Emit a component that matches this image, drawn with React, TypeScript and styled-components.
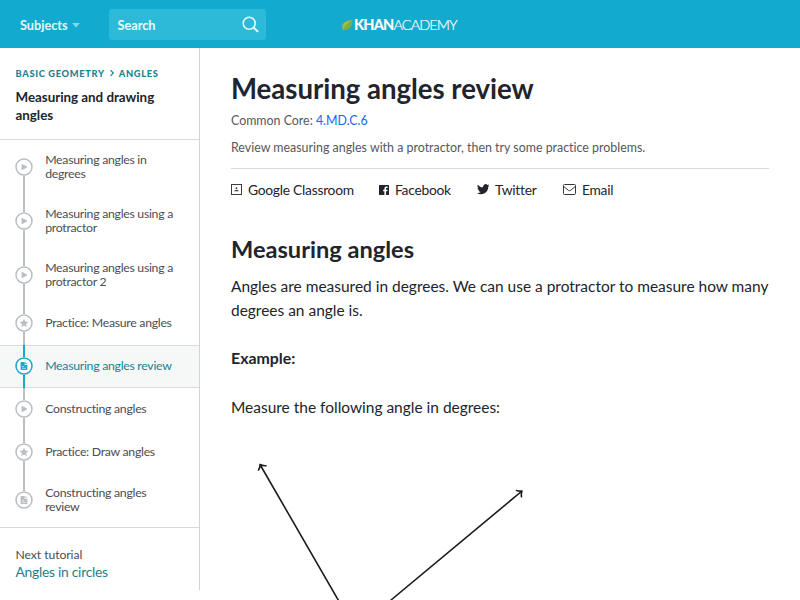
import React from "react";
import styled, { createGlobalStyle, css } from "styled-components";

const GlobalStyle = createGlobalStyle`
  * { box-sizing: border-box; }
  html, body, #root { margin: 0; padding: 0; height: 100%; }
  body { overflow: hidden; background: #fff; font-family: Lato, "Liberation Sans", sans-serif; color: #21242c; font-variant-ligatures: none; }
  svg { display: block; flex: none; }
  a { text-decoration: none; }
`;

const Page = styled.div`
  width: 800px;
  height: 600px;
  overflow: hidden;
  display: flex;
  flex-direction: column;
`;

const TopBar = styled.header`
  flex: none;
  height: 48px;
  background: #12aacf;
  display: grid;
  grid-template-columns: 89px 157px 1fr;
  align-items: center;
  padding-left: 20px;
  color: #fff;
`;

const SubjectsMenu = styled.button`
  border: 0;
  padding: 1px 0 0;
  background: none;
  color: #e3f6fa;
  font: 700 12.7px/20px Lato, sans-serif;
  display: flex;
  align-items: center;
  gap: 4px;
  svg { margin-top: 2px; }
`;

const SearchBox = styled.div`
  height: 31px;
  width: 157px;
  background: #2dbad8;
  border-radius: 3px;
  display: flex;
  align-items: center;
  justify-content: space-between;
  padding: 1px 7px 0 8.500px;
  color: #e9fafc;
  font-size: 12.7px;
  font-weight: 700;
`;

const Logo = styled.div`
  display: flex;
  align-items: center;
  padding-left: 76px;
  padding-top: 1px;
  font-size: 14.500px;
  line-height: 20px;
`;
const LogoHeavy = styled.span`
  font-weight: 900;
  letter-spacing: -0.8px;
`;
const LogoLight = styled.span`
  font-weight: 300;
  letter-spacing: -0.95px;
  -webkit-text-stroke: 0.2px #fff;
`;

const Columns = styled.div`
  flex: 1;
  min-height: 0;
  display: flex;
`;

const Sidebar = styled.aside`
  width: 200px;
  height: 542px;
  flex: none;
  border-right: 1px solid #d2d3d5;
`;

const SidebarHeader = styled.div`
  height: 92px;
  padding: 18px 16px 0 15.5px;
  border-bottom: 1px solid #d6d8da;
`;

const Breadcrumb = styled.nav`
  display: flex;
  align-items: center;
  height: 14px;
  font-size: 9.3px;
  font-weight: 900;
  letter-spacing: 0.66px;
  color: #1b8292;
  svg { margin: 0 4px 0 4px; }
`;

const TutorialTitle = styled.h2`
  margin: 7.500px 0 0;
  font-size: 13.4px;
  line-height: 18px;
  font-weight: 700;
  letter-spacing: -0.03px;
`;

const LessonList = styled.ul`
  list-style: none;
  margin: 0;
  padding: 0;
  border-bottom: 1px solid #d6d8da;
`;

const Lesson = styled.li<{ $tall?: boolean; $active?: boolean }>`
  height: ${(p) => (p.$tall ? 53.85 : 43)}px;
  display: flex;
  align-items: center;
  padding-left: 15px;
  font-size: 12.3px;
  letter-spacing: -0.29px;
  line-height: 14px;
  color: #4b4e53;
  ${(p) =>
    p.$active &&
    css`
      color: #1b7f8e;
      background: #f6f8f8;
      box-shadow: inset 0 1px #d9dbdc, inset 0 -1px #d9dbdc;
    `}
`;

const Track = styled.div<{ $active?: boolean }>`
  width: 18px;
  height: 100%;
  margin-right: 12.200px;
  display: flex;
  flex-direction: column;
  align-items: center;
  color: ${(p) => (p.$active ? "#16a9c8" : "#babec2")};
`;

const Rail = styled.span<{ $hidden?: boolean }>`
  flex: 1;
  width: 2px;
  background: ${(p) => (p.$hidden ? "transparent" : "currentColor")};
`;

const NextTutorial = styled.div`
  padding: 18px 15.5px;
  font-size: 12.2px;
  letter-spacing: -0.08px;
  line-height: 17px;
  color: #4b4e53;
`;
const NextLink = styled.a`
  display: block;
  font-size: 13.8px;
  line-height: 17px;
  letter-spacing: -0.25px;
  color: #1b7f8e;
`;

const Content = styled.main`
  flex: 1;
  padding: 23px 31.5px 0 31px;
`;

const Title = styled.h1`
  margin: 0;
  font-size: 27.6px;
  line-height: 36px;
  font-weight: 700;
  letter-spacing: -0.03px;
`;

const Meta = styled.p`
  margin: 6px 0 0;
  font-size: 12.4px;
  line-height: 16px;
  color: #56585e;
  a { color: #1865f2; }
`;

const Description = styled.p`
  margin: 11px 0 0;
  padding-bottom: 12px;
  font-size: 12.42px;
  line-height: 16px;
  color: #56585e;
  border-bottom: 1px solid #d8d9dc;
`;

const ShareRow = styled.div`
  display: flex;
  margin-top: 10px;
  height: 21px;
`;

const ShareLink = styled.a<{ $width: number }>`
  display: flex;
  align-items: center;
  width: ${(p) => p.$width}px;
  font-size: 13.8px;
  letter-spacing: -0.25px;
  line-height: 20px;
  white-space: nowrap;
  svg { margin-right: 6px; }
`;

const SectionTitle = styled.h2`
  margin: 34px 0 0;
  font-size: 23.6px;
  line-height: 30px;
  font-weight: 700;
`;

const Paragraph = styled.p<{ $gap: number; $bold?: boolean }>`
  margin: ${(p) => p.$gap}px 0 0;
  font-size: ${(p) => (p.$bold ? 15.9 : 15.48)}px;
  line-height: 24px;
  white-space: nowrap;
  font-weight: ${(p) => (p.$bold ? 700 : 400)};
`;

const Figure = styled.figure`
  margin: 31px 0 0;
`;

type Kind = "video" | "exercise" | "article";

const KindIcon = ({ kind }: { kind: Kind }) => (
  <svg width="18" height="18" viewBox="0 0 18 18">
    <circle cx="9" cy="9" r="8" fill="#fff" stroke="currentColor" strokeWidth="1.5" />
    {kind === "video" && <path d="M7 6.3v5.4l5-2.7z" fill="currentColor" stroke="currentColor" strokeWidth="0.8" strokeLinejoin="round" />}
    {kind === "exercise" && (
      <path d="M9 4.7l1.3 2.8 3.1.4-2.3 2.1.6 3L9 11.5 6.3 13l.6-3-2.3-2.1 3.1-.4z" fill="currentColor" />
    )}
    {kind === "article" && (
      <>
        <path d="M6.3 5h3.4v2.9h2.7v4.4q0 .7-.7.7H6.3q-.7 0-.7-.7V5.7q0-.7.7-.7zM10.4 5l2 2.2h-2z" fill="currentColor" />
        <path d="M7 9.6h2.2M7 11.3h4" stroke="#fff" strokeWidth="0.6" />
      </>
    )}
  </svg>
);

const lessons: { label: string[]; kind: Kind; active?: boolean }[] = [
  { label: ["Measuring angles in", "degrees"], kind: "video" },
  { label: ["Measuring angles using a", "protractor"], kind: "video" },
  { label: ["Measuring angles using a", "protractor 2"], kind: "video" },
  { label: ["Practice: Measure angles"], kind: "exercise" },
  { label: ["Measuring angles review"], kind: "article", active: true },
  { label: ["Constructing angles"], kind: "video" },
  { label: ["Practice: Draw angles"], kind: "exercise" },
  { label: ["Constructing angles", "review"], kind: "article" },
];

export default function App() {
  return (
    <Page>
      <GlobalStyle />
      <TopBar>
        <SubjectsMenu>
          Subjects
          <svg width="8" height="5" viewBox="0 0 8 5"><path d="M0 0h8L4 4.6z" fill="#84d5e8" /></svg>
        </SubjectsMenu>
        <SearchBox>
          Search
          <svg width="17" height="17" viewBox="0 0 17 17" fill="none" stroke="#effbfd" strokeLinecap="round">
            <circle cx="7.2" cy="7.2" r="6" strokeWidth="1.6" />
            <path d="M11.8 11.8l3.6 3.4" strokeWidth="2" />
          </svg>
        </SearchBox>
        <Logo>
          <svg width="12" height="12" viewBox="0 0 12 12">
            <path d="M10.600.8C5.500 1.300.4 3.200.3 7.600c0 1.500.3 2.700.8 3.600C3.400 7 6.300 3.600 10.600.8z" fill="#b0b83a" />
            <path d="M1.100 11.200C3.400 7 6.300 3.600 10.600.8c-.5 1.500-.2 3-.8 4.900-1 3.500-4.700 5.600-8.700 5.500z" fill="#7fae45" />
          </svg>
          <LogoHeavy>KHAN</LogoHeavy>
          <LogoLight>ACADEMY</LogoLight>
        </Logo>
      </TopBar>
      <Columns>
        <Sidebar>
          <SidebarHeader>
            <Breadcrumb>
              BASIC GEOMETRY
              <svg width="6" height="8" viewBox="0 0 6 8"><path d="M1.500 1.200L4.300 4 1.500 6.800" fill="none" stroke="currentColor" strokeWidth="1.200" /></svg>
              ANGLES
            </Breadcrumb>
            <TutorialTitle>Measuring and drawing<br />angles</TutorialTitle>
          </SidebarHeader>
          <LessonList>
            {lessons.map((l, i) => (
              <Lesson key={i} $tall={l.label.length > 1} $active={l.active}>
                <Track $active={l.active}>
                  <Rail $hidden={i === 0} />
                  <KindIcon kind={l.kind} />
                  <Rail $hidden={i === lessons.length - 1} />
                </Track>
                <span>{l.label[0]}{l.label[1] && <><br />{l.label[1]}</>}</span>
              </Lesson>
            ))}
          </LessonList>
          <NextTutorial>
            Next tutorial
            <NextLink>Angles in circles</NextLink>
          </NextTutorial>
        </Sidebar>
        <Content>
          <Title>Measuring angles review</Title>
          <Meta>Common Core: <a>4.MD.C.6</a></Meta>
          <Description>Review measuring angles with a protractor, then try some practice problems.</Description>
          <ShareRow>
            <ShareLink $width={148}>
              <svg width="11" height="11" viewBox="0 0 11 11">
                <rect x=".5" y=".5" width="10" height="10" fill="none" stroke="#3a3d44" />
                <circle cx="5.500" cy="4.200" r=".9" fill="#3a3d44" />
                <path d="M3.200 7.300q0-1.600 2.300-1.600T7.800 7.300z" fill="#3a3d44" />
              </svg>
              Google Classroom
            </ShareLink>
            <ShareLink $width={97.5}>
              <svg width="10" height="10" viewBox="0 0 10 10">
                <path d="M.6 0h8.800q.6 0 .6.600v8.800q0 .6-.6.600H7V6.200h1.300l.2-1.500H7v-1q0-.7.700-.7h.9V1.600H7.300Q5.400 1.600 5.400 3.500v1.200H4.100v1.500h1.300V10H.6Q0 10 0 9.400V.6Q0 0 .6 0z" fill="#21242c" />
              </svg>
              Facebook
            </ShareLink>
            <ShareLink $width={86.5}>
              <svg width="12.500" height="11" viewBox="0 0 24 21">
                <path d="M23.950 2.570a10 10 0 0 1-2.820.770 4.960 4.960 0 0 0 2.160-2.720c-.950.550-2 .950-3.130 1.180a4.920 4.920 0 0 0-8.380 4.480C7.690 6.090 4.070 4.130 1.640 1.160a4.820 4.820 0 0 0-.670 2.480c0 1.710.870 3.210 2.190 4.100a4.900 4.900 0 0 1-2.230-.620v.060a4.920 4.920 0 0 0 3.950 4.830 5 5 0 0 1-2.210.080 4.940 4.940 0 0 0 4.600 3.420A9.870 9.870 0 0 1 0 17.540a14 14 0 0 0 7.550 2.210c9.050 0 14-7.500 14-13.980 0-.210 0-.420-.020-.630a9.940 9.940 0 0 0 2.420-2.570z" fill="#21242c" />
              </svg>
              Twitter
            </ShareLink>
            <ShareLink $width={60}>
              <svg width="13" height="11" viewBox="0 0 13 11" fill="none" stroke="#33363d">
                <rect x=".5" y=".5" width="12" height="10" rx="1" />
                <path d="M.8 2.500L5.300 6.300q1.200.9 2.400 0L12.200 2.500" />
              </svg>
              Email
            </ShareLink>
          </ShareRow>
          <SectionTitle>Measuring angles</SectionTitle>
          <Paragraph $gap={9.5}>
            Angles are measured in degrees. We can use a protractor to measure how many<br />
            degrees an angle is.
          </Paragraph>
          <Paragraph $gap={24} $bold>Example:</Paragraph>
          <Paragraph $gap={25}>Measure the following angle in degrees:</Paragraph>
          <Figure>
            <svg width="310" height="150" viewBox="0 0 310 150" fill="none" stroke="#1b1c20" strokeWidth="1.600" strokeLinecap="round" strokeLinejoin="round">
              <path d="M29 14.500L107.500 150.500M27.500 20Q29.300 17.500 29 14.500Q31.500 16 35 15.700" />
              <path d="M291 41L160 150M285.500 40.500Q288.500 41.500 291 41Q290 43.500 290.500 46.800" />
            </svg>
          </Figure>
        </Content>
      </Columns>
    </Page>
  );
}
